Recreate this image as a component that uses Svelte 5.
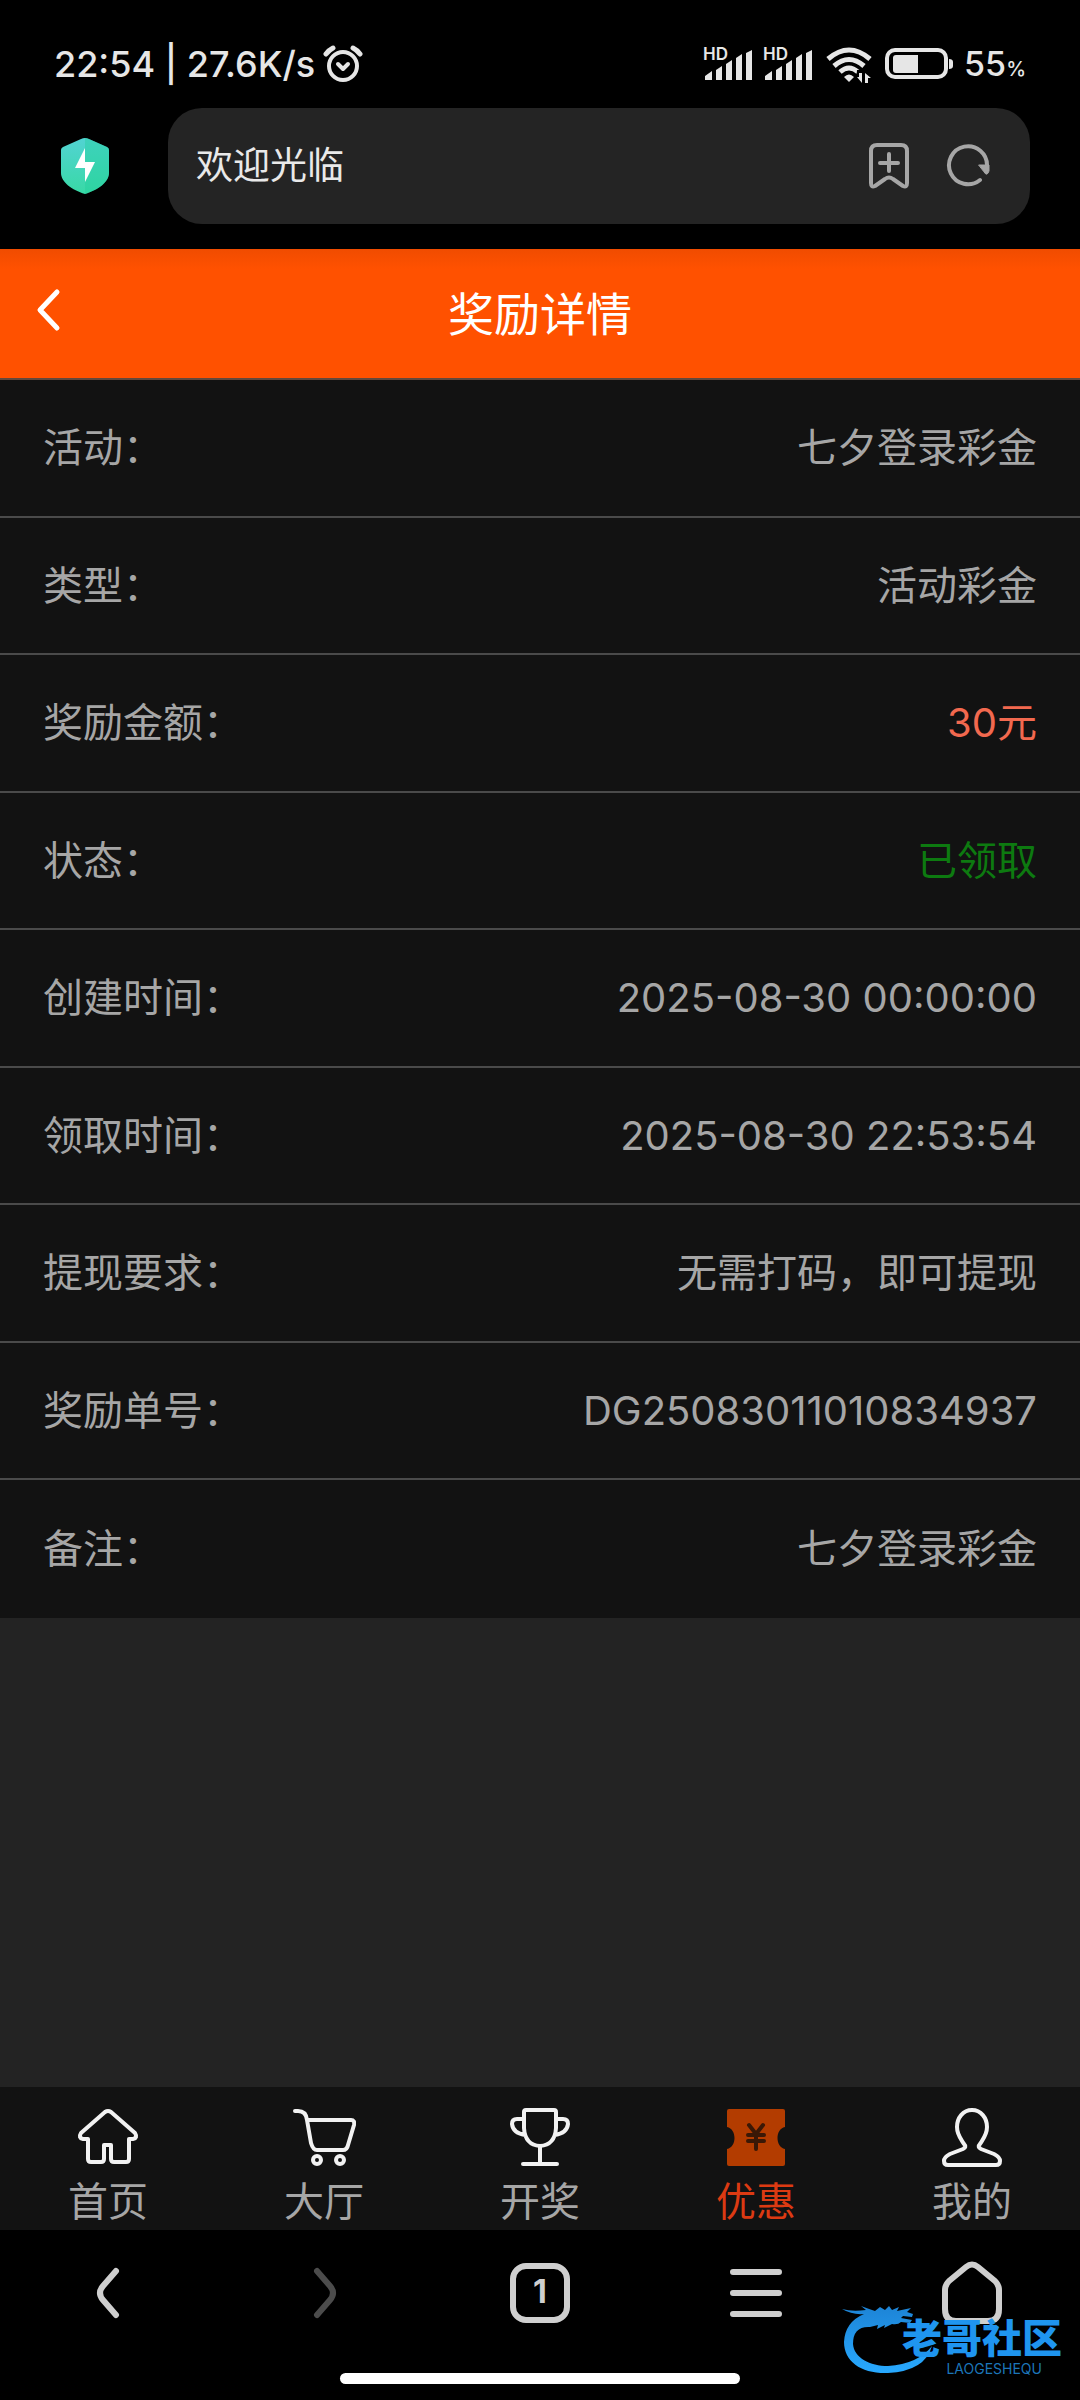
<script>
	const details = [
		{ label: "活动：", value: "七夕登录彩金" },
		{ label: "类型：", value: "活动彩金" },
		{ label: "奖励金额：", value: "30元", tone: "amount" },
		{ label: "状态：", value: "已领取", tone: "done" },
		{ label: "创建时间：", value: "2025-08-30 00:00:00" },
		{ label: "领取时间：", value: "2025-08-30 22:53:54" },
		{ label: "提现要求：", value: "无需打码，即可提现" },
		{ label: "奖励单号：", value: "DG25083011010834937" },
		{ label: "备注：", value: "七夕登录彩金" }
	];

	const tabs = [
		{ id: "home", label: "首页" },
		{ id: "hall", label: "大厅" },
		{ id: "draw", label: "开奖" },
		{ id: "promo", label: "优惠" },
		{ id: "mine", label: "我的" }
	];

	let activeTab = $state("promo");
</script>

<div class="screen">
	<div class="statusBar">
		<div class="statusGroup">
			<span>22:54 | 27.6K/s</span>
			<svg class="alarm" width="40" height="38" viewBox="0 0 40 38">
				<circle cx="20" cy="21" r="14" stroke-width="4" />
				<path d="M15 19l5 5 5-5" stroke-width="4" stroke-linejoin="round" />
				<path d="M3 9q3-4 7-6M37 9q-3-4-7-6" stroke-width="5" />
			</svg>
		</div>
		<div class="statusGroup right">
			{#each [1, 2] as sim (sim)}
				<svg width="50" height="38" viewBox="0 0 50 38">
					<text x="0" y="15">HD</text>
					<path class="solid" d="M2 35v-4l7-5v9zM13 35v-10l6-4v14zM23 35v-16l6-4v20zM33 35v-22l6-4v26zM43 35v-27l6-3v30z" />
				</svg>
			{/each}
			<svg width="52" height="38" viewBox="0 0 52 38">
				<path d="M5 14q21-18 42 0M11 21q15-13 30 0M17 27q9-8 18 0" stroke-width="5" stroke-linecap="butt" />
				<path class="solid" d="M21 32q5-5 10 0l-5 5z" />
				<path class="cut" d="M34 25h17v13h-18z" />
				<path class="solid" d="M36 28h3v10l-5-6h2zM42 38v-10l6 5h-3v5z" />
			</svg>
			<svg width="69" height="38" viewBox="3 0 69 38">
				<rect x="5" y="5" width="59" height="27" rx="8" stroke-width="4" />
				<path class="solid" d="M14 10h22v18h-22q-3 0-3-3v-12q0-3 3-3zM67 14q4 0 4 3v4q0 3-4 3z" />
			</svg>
			<span>55<small>%</small></span>
		</div>
	</div>

	<div class="addressBar">
		<svg class="shield" width="50" height="58" viewBox="0 0 50 58">
			<defs>
				<linearGradient id="shieldFill" x1="0" y1="0" x2="0" y2="1">
					<stop offset="0" stop-color="#52d3d3" />
					<stop offset="1" stop-color="#38d9a5" />
				</linearGradient>
			</defs>
			<path fill="url(#shieldFill)" d="M25 1q2 0 4 1l18 8q2 1 2 3v23c0 9-11 17-24 21c-13-4-24-12-24-21V13q0-2 2-3l18-8q2-1 4-1z" />
			<path fill="#20cf9b" opacity="0.4" d="M25 1q2 0 4 1l18 8q2 1 2 3v23c0 9-11 17-24 21z" />
			<path fill="#fff" d="M25 11v14h10L25 45V31H15z" />
		</svg>
		<div class="addressBox">
			<input type="text" value="欢迎光临" aria-label="地址" />
			<button aria-label="收藏">
				<svg width="42" height="48" viewBox="0 0 42 48">
					<path d="M9 3h24q6 0 6 6v32q0 5-4 3l-10-7q-4-3-8 0l-10 7q-4 2-4-3V9q0-6 6-6z" />
					<path d="M21 12v17M12 21h18" />
				</svg>
			</button>
			<button aria-label="刷新">
				<svg width="44" height="48" viewBox="0 0 44 48">
					<path d="M34 38a19 19 0 1 1 7-14" />
					<path class="arrow" d="M33 23h10v6q-2 6-5 1z" />
				</svg>
			</button>
		</div>
	</div>

	<header>
		<button class="back" aria-label="返回">
			<svg width="30" height="44" viewBox="0 0 30 44"><path d="M24 4L7 22l17 18" /></svg>
		</button>
		<h1>奖励详情</h1>
	</header>

	<main>
		<dl>
			{#each details as item (item.label)}
				<div class="row">
					<dt>{item.label}</dt>
					<dd class={item.tone}>{item.value}</dd>
				</div>
			{/each}
		</dl>
	</main>

	<nav class="tabs">
		{#each tabs as tab (tab.id)}
			<button class:active={activeTab == tab.id} onclick={() => (activeTab = tab.id)}>
				<svg width="64" height="60" viewBox="0 0 64 60">
					{#if tab.id == "home"}
						<path d="M29 5q3-2 6 0l24 21q3 5-2 6h-4v20q0 3-3 3H38q-3 0-3-3V38h-7v14q0 3-3 3H15q-3 0-3-3V32H7q-5-1-2-6z" />
					{:else if tab.id == "hall"}
						<path d="M3 4h3q8 0 9 9l4 23q2 7 6 7h26q4 0 5-5l6-20q1-5-3-5H15" />
						<circle cx="25" cy="53" r="4" />
						<circle cx="48" cy="53" r="4" />
					{:else if tab.id == "draw"}
						<path d="M18 3h28q2 0 2 2v16q-1 17-16 18q-15-1-16-18V5q0-2 2-2zM16 12H9q-5 0-5 5q1 9 13 11M48 12h7q5 0 5 5q-1 9-13 11M32 39v18M15 57h34" />
					{:else if tab.id == "promo"}
						<path class="ticket" d="M5 2h54q2 0 2 2v16c-10 2-10 20 0 22v15q0 2-2 2H5q-2 0-2-2V42c10-2 10-20 0-22V4q0-2 2-2z" />
						<path class="yen" d="M25 18l7 9 7-9M32 27v15M24 28h16M24 34h16" />
					{:else}
						<path d="M32 3c-9 0-15 8-15 17c0 8 4 12 7 17q3 3-1 5L10 47q-6 3-6 7q0 4 4 4h48q4 0 4-4q0-4-6-7l-13-5q-4-2-1-5c3-5 7-9 7-17c0-9-6-17-15-17z" />
					{/if}
				</svg>
				<span>{tab.label}</span>
			</button>
		{/each}
	</nav>

	<footer>
		<nav class="browserNav">
			<button aria-label="后退">
				<svg width="64" height="64" viewBox="0 0 64 64"><path d="M40 10L27 25q-6 7 0 14l13 15" /></svg>
			</button>
			<button class="dim" aria-label="前进">
				<svg width="64" height="64" viewBox="0 0 64 64"><path d="M25 10l13 15q6 7 0 14L25 54" /></svg>
			</button>
			<button aria-label="标签页">
				<span class="count">1</span>
			</button>
			<button aria-label="菜单">
				<svg width="64" height="64" viewBox="0 0 64 64"><path d="M9 11h46M9 32h46M9 53h46" /></svg>
			</button>
			<button aria-label="主页">
				<svg width="64" height="64" viewBox="0 0 64 64">
					<path d="M26 6q6-5 12 0l17 14q4 4 4 9v19q0 12-11 12H16q-11 0-11-12V29q0-5 4-9z" />
				</svg>
			</button>
		</nav>
		<div class="homeIndicator"></div>
		<div class="watermark">
			<svg width="224" height="80" viewBox="0 0 224 80">
				<defs>
					<linearGradient id="dragonFill" x1="0" y1="0" x2="0" y2="1">
						<stop offset="0" stop-color="#1d84d6" />
						<stop offset="1" stop-color="#28a9ff" />
					</linearGradient>
				</defs>
				<path fill="url(#dragonFill)" d="M0 9q10 3 24 1l-5-4q8 3 14 5l5-4 5 3 4-4 3 4 7-3-2 4 14-3-4 4 6 2-1 3-9-1-2 2 11 2-2 3-9-1q-3 3-9 2l-8 4 1-3-8 4 1-4-8 2Q11 26 11 44C12 58 28 66 46 66Q76 64 90 46Q83 71 46 73C20 74 2 62 2 42Q3 22 22 14Q10 15 0 9z" />
			</svg>
			<strong>老哥社区</strong>
			<em>LAOGESHEQU</em>
		</div>
	</footer>
</div>

<style>
	:global(body) {
		background: #232323;
	}

	.screen {
		display: flex;
		flex-direction: column;
		min-height: 100vh;
		font-family: Inter, "Noto Sans CJK SC", sans-serif;
		font-size: 40px;
		line-height: 40px;
		color: #a6a6a6;
	}

	button {
		display: flex;
		align-items: center;
		justify-content: center;
		padding: 0;
		border: none;
		background: none;
		color: inherit;
		font: inherit;
		cursor: pointer;
	}

	svg {
		display: block;
		flex: none;
		fill: none;
		stroke: currentColor;
		stroke-linecap: round;
		stroke-linejoin: round;
	}

	.statusBar {
		display: flex;
		justify-content: space-between;
		align-items: center;
		padding: 44px 54px 24px;
		background: #000;
		color: #e6e6e6;
		font-size: 36px;
		font-weight: 500;
	}

	.statusGroup {
		display: flex;
		align-items: center;
		gap: 8px;
	}

	.right {
		gap: 10px;
	}

	.right span {
		font-size: 34px;
	}

	.right small {
		font-size: 20px;
		line-height: 20px;
	}

	.statusBar text {
		fill: currentColor;
		stroke: none;
		font-size: 17px;
		font-weight: 600;
	}

	.solid {
		fill: currentColor;
		stroke: none;
	}

	.cut {
		fill: #000;
		stroke: none;
	}

	.addressBar {
		display: flex;
		align-items: center;
		gap: 58px;
		padding: 0 50px 25px 60px;
		background: #000;
	}

	.shield {
		stroke: none;
	}

	.addressBox {
		flex: 1;
		display: flex;
		align-items: center;
		gap: 36px;
		min-width: 0;
		height: 116px;
		padding: 0 40px 0 28px;
		box-sizing: border-box;
		border-radius: 34px;
		background: #242424;
		color: #a6a6a6;
	}

	.addressBox input {
		flex: 1;
		min-width: 0;
		padding: 0;
		border: none;
		outline: none;
		background: none;
		color: #e9e9e9;
		font: inherit;
		font-size: 37px;
	}

	.addressBox svg {
		stroke-width: 4;
	}

	.arrow {
		fill: currentColor;
		stroke-width: 1;
	}

	header {
		display: grid;
		grid-template-columns: 96px 1fr 96px;
		align-items: center;
		height: 131px;
		box-sizing: border-box;
		border-bottom: 2px solid #62483c;
		background: linear-gradient(#f04c00, #ff5100 20px);
		color: #fff;
	}

	header svg {
		stroke-width: 5;
	}

	.back {
		height: 100%;
		padding-bottom: 8px;
	}

	h1 {
		margin: 0;
		font-size: 46px;
		font-weight: 400;
		line-height: 48px;
		text-align: center;
	}

	main {
		flex: 1;
	}

	dl {
		display: grid;
		grid-auto-rows: minmax(138px, auto) minmax(137px, auto);
		margin: 0;
		background: #121212;
	}

	.row {
		display: flex;
		align-items: center;
		justify-content: space-between;
		padding: 0 43px;
		border-bottom: 2px solid #4a4a4a;
	}

	.row:last-child {
		border-bottom: none;
	}

	dd {
		margin: 0;
		text-align: right;
	}

	.amount {
		color: #f2694f;
	}

	.done {
		color: #0d7a10;
	}

	.tabs {
		display: grid;
		grid-template-columns: repeat(5, 1fr);
		background: #121212;
	}

	.tabs button {
		flex-direction: column;
		gap: 15px;
		padding: 20px 0 8px;
	}

	.tabs svg {
		stroke: #f2f2f2;
		stroke-width: 4;
	}

	.tabs .ticket {
		fill: #b33c00;
		stroke: none;
	}

	.tabs .yen {
		stroke: #3a1806;
	}

	.tabs .active {
		color: #dc3a12;
	}

	footer {
		position: relative;
		padding-bottom: 16px;
		background: #000;
		color: #cfcfcf;
	}

	.browserNav {
		display: grid;
		grid-template-columns: repeat(5, 1fr);
		padding: 31px 0 48px;
	}

	.browserNav svg {
		stroke-width: 6;
	}

	.dim {
		color: #4c4c4c;
	}

	.count {
		width: 60px;
		height: 60px;
		box-sizing: border-box;
		border: 6px solid currentColor;
		border-radius: 16px;
		font-size: 32px;
		font-weight: 700;
		line-height: 46px;
	}

	.homeIndicator {
		width: 37%;
		height: 11px;
		margin: 0 auto;
		border-radius: 6px;
		background: #fff;
	}

	/* community logo lies over the corner of the toolbar */
	.watermark {
		position: absolute;
		right: 14px;
		bottom: 20px;
		width: 224px;
		height: 80px;
	}

	.watermark svg {
		stroke: none;
	}

	.watermark strong {
		position: absolute;
		right: 4px;
		top: 20px;
		color: #1f95ef;
		font-size: 40px;
		font-weight: 900;
		line-height: 38px;
	}

	.watermark em {
		position: absolute;
		right: 24px;
		top: 62px;
		color: #1c75b8;
		font-size: 14px;
		font-style: normal;
		line-height: 14px;
	}
</style>
